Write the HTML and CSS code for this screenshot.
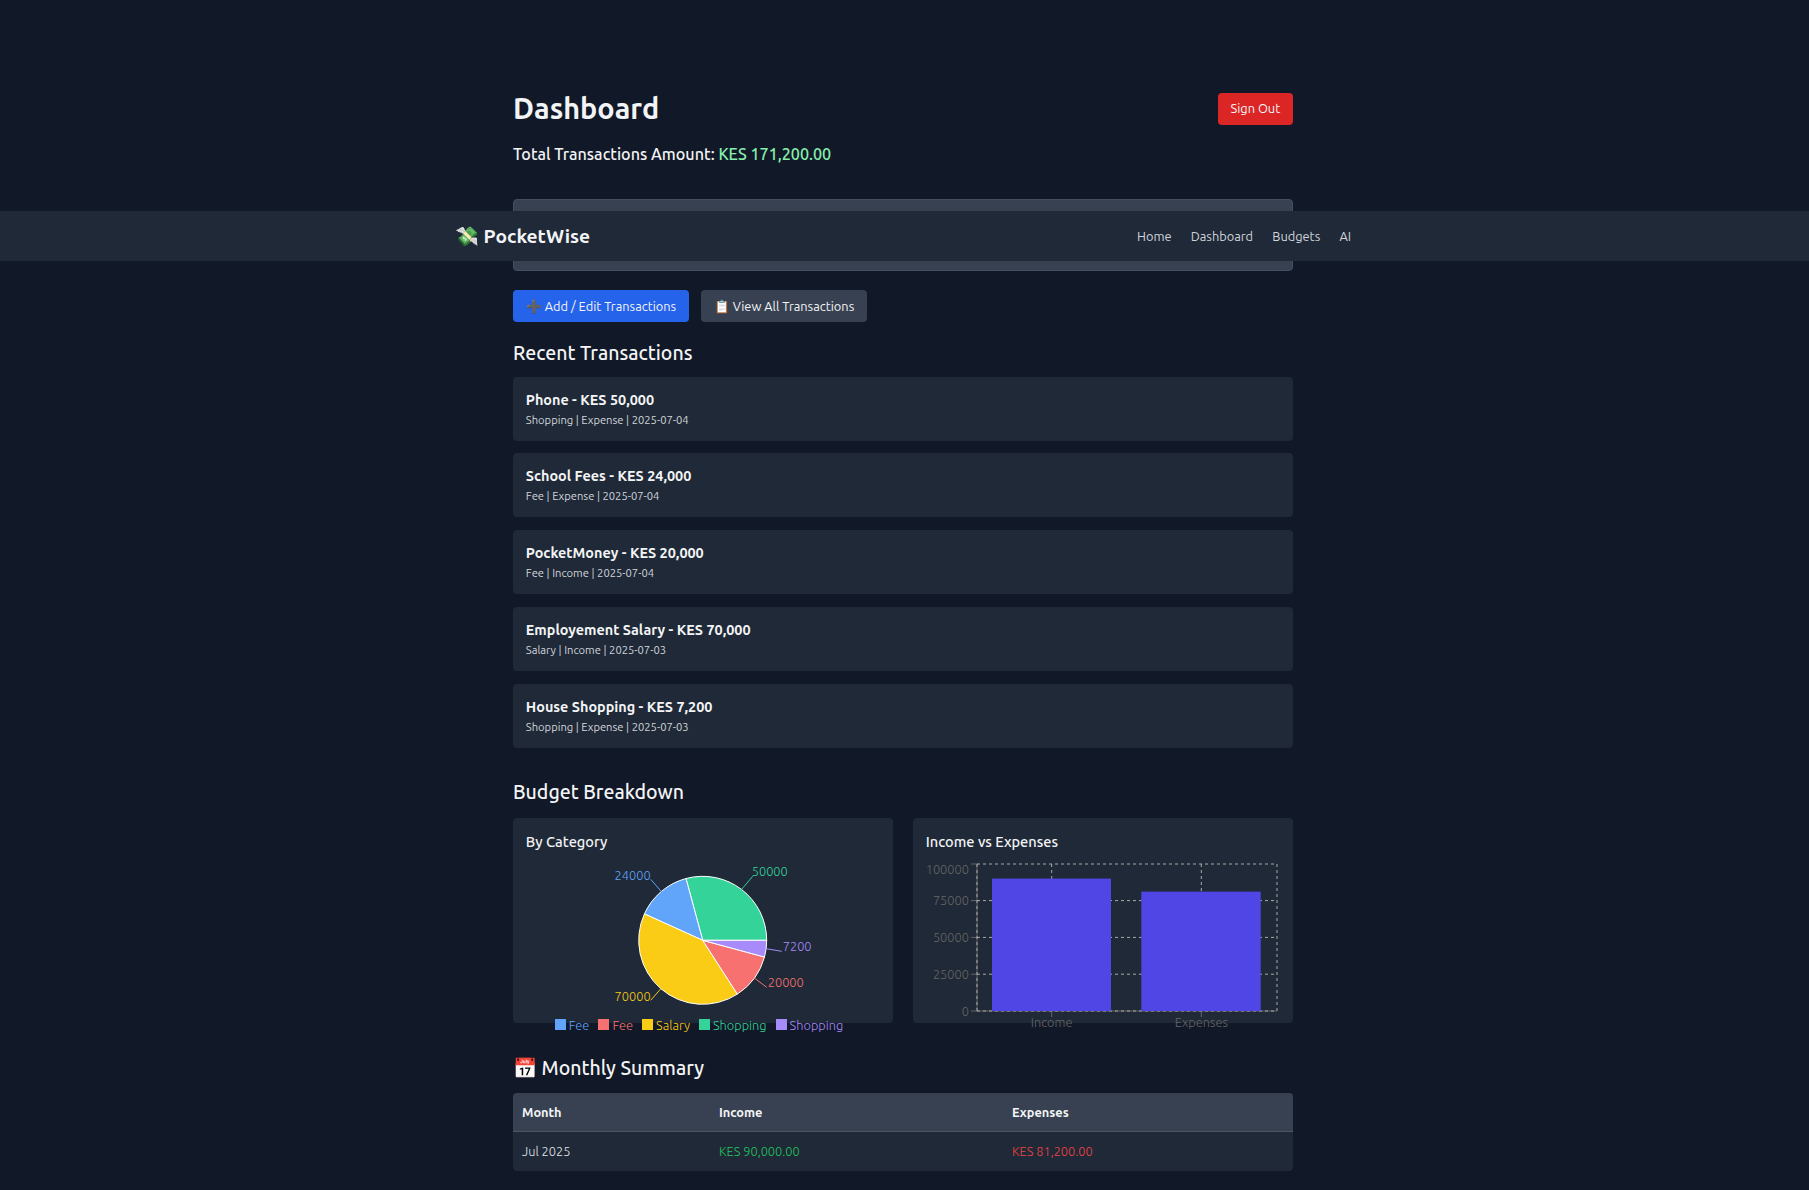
FILE: index.html
```html
<!DOCTYPE html>
<html lang="en">
<head>
<meta charset="UTF-8">
<meta name="viewport" content="width=device-width, initial-scale=1.0">
<title>PocketWise Dashboard</title>
<link rel="stylesheet" href="styles.css">
</head>
<body>
<nav class="navbar">
    <div class="nav-inner">
        <div class="logo"><span class="logo-icon">💸</span> PocketWise</div>
        <div class="nav-links">
            <a href="#">Home</a>
            <a href="#">Dashboard</a>
            <a href="#">Budgets</a>
            <a href="#">AI</a>
        </div>
    </div>
</nav>

<main class="page">
    <div class="page-head">
        <h1>Dashboard</h1>
        <button class="btn btn-red" type="button">Sign Out</button>
    </div>
    <p class="total">Total Transactions Amount: <span class="total-value">KES 171,200.00</span></p>

    <div class="notice"></div>

    <div class="actions">
        <a class="btn btn-blue" href="#">➕ Add / Edit Transactions</a>
        <a class="btn btn-gray" href="#">📋 View All Transactions</a>
    </div>

    <h2 class="section-title title-recent">Recent Transactions</h2>
    <div class="tx-card">
        <div class="tx-name">Phone - KES 50,000</div>
        <div class="tx-meta">Shopping | Expense | 2025-07-04</div>
    </div>
    <div class="tx-card">
        <div class="tx-name">School Fees - KES 24,000</div>
        <div class="tx-meta">Fee | Expense | 2025-07-04</div>
    </div>
    <div class="tx-card">
        <div class="tx-name">PocketMoney - KES 20,000</div>
        <div class="tx-meta">Fee | Income | 2025-07-04</div>
    </div>
    <div class="tx-card">
        <div class="tx-name">Employement Salary - KES 70,000</div>
        <div class="tx-meta">Salary | Income | 2025-07-03</div>
    </div>
    <div class="tx-card">
        <div class="tx-name">House Shopping - KES 7,200</div>
        <div class="tx-meta">Shopping | Expense | 2025-07-03</div>
    </div>

    <h2 class="section-title title-budget">Budget Breakdown</h2>
    <div class="charts">
        <section class="chart-card">
            <h3>By Category</h3>
            <svg class="chart pie-chart" width="354" height="165" viewBox="0 0 354 165">
                <g transform="translate(176.7 88.3)">
                    <g stroke="#fff" stroke-width="1">
                        <path fill="#34d399" d="M0 0L64 0A64 64 0 0 0 -16.72 -61.78Z"/>
                        <path fill="#60a5fa" d="M0 0L-16.72 -61.78A64 64 0 0 0 -58.29 -26.43Z"/>
                        <path fill="#facc15" d="M0 0L-58.29 -26.43A64 64 0 0 0 34.66 53.8Z"/>
                        <path fill="#f87171" d="M0 0L34.66 53.8A64 64 0 0 0 61.78 16.72Z"/>
                        <path fill="#a78bfa" d="M0 0L61.78 16.72A64 64 0 0 0 64 0Z"/>
                    </g>
                    <g fill="none">
                        <path stroke="#34d399" d="M39 -51L50 -64"/>
                        <path stroke="#60a5fa" d="M-41.4 -48.8L-52 -61"/>
                        <path stroke="#facc15" d="M-41.8 48.4L-52 60"/>
                        <path stroke="#f87171" d="M51.7 37.8L64 47"/>
                        <path stroke="#a78bfa" d="M63.4 8.4L79 11"/>
                    </g>
                    <g class="pie-label">
                        <text x="49" y="-64.5" fill="#34d399">50000</text>
                        <text x="-52" y="-60.5" fill="#60a5fa" text-anchor="end">24000</text>
                        <text x="-52" y="60.5" fill="#facc15" text-anchor="end">70000</text>
                        <text x="65" y="46.5" fill="#f87171">20000</text>
                        <text x="80" y="10.5" fill="#a78bfa">7200</text>
                    </g>
                </g>
            </svg>
            <ul class="legend">
                <li class="legend-blue">Fee</li>
                <li class="legend-red">Fee</li>
                <li class="legend-yellow">Salary</li>
                <li class="legend-green">Shopping</li>
                <li class="legend-purple">Shopping</li>
            </ul>
        </section>
        <section class="chart-card">
            <h3>Income vs Expenses</h3>
            <svg class="chart" width="354" height="180" viewBox="0 0 354 180">
                <g stroke="#666" fill="none">
                    <path d="M51 159H351"/>
                    <path d="M51 12V159"/>
                    <path d="M45 159H51M45 122.2H51M45 85.4H51M45 48.6H51M45 12H51"/>
                    <path d="M125.7 159V165M275.3 159V165"/>
                </g>
                <g stroke="#aaa" fill="none" stroke-dasharray="3 3">
                    <path d="M51 122.2H351M51 85.4H351M51 48.6H351M51 12H351"/>
                    <path d="M125.7 12V159M275.3 12V159M51 12V159M351 12V159M51 159H351"/>
                </g>
                <rect x="66" y="26.6" width="119" height="132.4" fill="#4f46e5"/>
                <rect x="215.3" y="39.6" width="119.4" height="119.4" fill="#4f46e5"/>
                <g class="axis-label">
                    <text x="43" y="163.5" text-anchor="end">0</text>
                    <text x="43" y="126.5" text-anchor="end">25000</text>
                    <text x="43" y="90" text-anchor="end">50000</text>
                    <text x="43" y="53" text-anchor="end">75000</text>
                    <text x="43" y="21.5" text-anchor="end">100000</text>
                    <text x="125.7" y="175" text-anchor="middle">Income</text>
                    <text x="275.3" y="175" text-anchor="middle">Expenses</text>
                </g>
            </svg>
        </section>
    </div>

    <h2 class="section-title title-monthly">📅 Monthly Summary</h2>
    <table class="summary">
        <thead>
            <tr>
                <th class="col-month">Month</th>
                <th class="col-income">Income</th>
                <th>Expenses</th>
            </tr>
        </thead>
        <tbody>
            <tr>
                <td>Jul 2025</td>
                <td class="income">KES 90,000.00</td>
                <td class="expense">KES 81,200.00</td>
            </tr>
        </tbody>
    </table>
</main>
</body>
</html>
```

FILE: styles.css
```css
* {
    box-sizing: border-box;
}

body {
    margin: 0;
    padding-right: 3px;
    background-color: #111827;
    color: #f3f4f6;
    font-family: Ubuntu, "Noto Sans", "Open Sans", sans-serif;
}

.navbar {
    position: absolute;
    top: 211px;
    left: 0;
    right: 0;
    height: 50px;
    padding-right: 3px;
    background-color: #1f2937;
}

.nav-inner {
    width: 896px;
    height: 100%;
    margin: 0 auto;
    display: flex;
    align-items: center;
    justify-content: space-between;
}

.logo {
    font-size: 19.2px;
    font-weight: 700;
    color: #f3f4f6;
}

.nav-links {
    display: flex;
    gap: 19.2px;
}

.nav-links a {
    font-size: 12.8px;
    color: #d1d5db;
    text-decoration: none;
}

.page {
    width: 780px;
    margin: 0 auto;
    padding-top: 90px;
}

.page-head {
    display: flex;
    align-items: center;
    justify-content: space-between;
}

h1 {
    margin: 0;
    font-size: 28.8px;
    line-height: 36px;
    font-weight: 700;
}

.total {
    margin: 14px 0 31px;
    font-size: 16.15px;
    line-height: 28px;
    font-weight: 500;
}

.total-value {
    color: #86efac;
}

.notice {
    height: 72px;
    background-color: #374151;
    border: 1px solid #444e5e;
    border-radius: 4px;
}

.btn {
    display: inline-flex;
    align-items: center;
    height: 32px;
    padding: 0 12.8px;
    font-family: inherit;
    font-size: 12.8px;
    color: #f3f4f6;
    text-decoration: none;
    border: none;
    border-radius: 4px;
}

.btn-red {
    background-color: #dc2626;
    margin-top: 2px;
    padding-bottom: 2px;
}

.btn-blue {
    background-color: #2563eb;
}

.btn-gray {
    background-color: #374151;
}

.actions {
    display: flex;
    gap: 12px;
    margin-top: 19px;
}

.section-title {
    margin: 0;
    font-size: 19.5px;
    line-height: 28px;
    font-weight: 500;
}

.title-recent {
    margin-top: 17px;
    margin-bottom: 9.6px;
}

.title-budget {
    margin-top: 30.5px;
    margin-bottom: 12px;
}

.title-monthly {
    margin-top: 30.8px;
    margin-bottom: 11.6px;
}

.tx-card {
    height: 64px;
    margin-bottom: 12.8px;
    padding: 11px 12.8px;
    background-color: #1f2937;
    border-radius: 4px;
}

.tx-name {
    font-size: 14.4px;
    line-height: 24px;
    font-weight: 700;
}

.tx-meta {
    font-size: 11.2px;
    line-height: 16px;
    color: #d1d5db;
}

.charts {
    display: grid;
    grid-template-columns: 1fr 1fr;
    gap: 20px;
}

.chart-card {
    height: 204.6px;
    padding: 13.4px 12.8px 0;
    background-color: #1f2937;
    border-radius: 4px;
}

h3 {
    margin: 0;
    font-size: 14.6px;
    line-height: 20px;
    font-weight: 500;
}

.chart {
    display: block;
    overflow: visible;
}

.pie-label text,
.axis-label text {
    font-size: 12.8px;
    font-weight: 300;
}

.axis-label text {
    fill: #666;
}

.legend {
    display: flex;
    justify-content: center;
    gap: 9px;
    margin: 0;
    padding: 0 8px 0 0;
    list-style: none;
    font-size: 12.8px;
    font-weight: 300;
    line-height: 16px;
}

.legend li {
    display: flex;
    align-items: center;
    gap: 3px;
}

.legend li::before {
    content: "";
    width: 11px;
    height: 11px;
}

.legend-blue { color: #60a5fa; }
.legend-blue::before { background-color: #60a5fa; }
.legend-red { color: #f87171; }
.legend-red::before { background-color: #f87171; }
.legend-yellow { color: #facc15; }
.legend-yellow::before { background-color: #facc15; }
.legend-green { color: #34d399; }
.legend-green::before { background-color: #34d399; }
.legend-purple { color: #a78bfa; }
.legend-purple::before { background-color: #a78bfa; }

.summary {
    width: 100%;
    border-collapse: separate;
    border-spacing: 0;
    font-size: 12.8px;
    font-weight: 300;
    color: #e5e7eb;
    background-color: #1f2937;
    border-radius: 4px;
    overflow: hidden;
}

.summary th,
.summary td {
    height: 38.4px;
    padding: 0 9px;
    text-align: left;
}

.summary th {
    height: 39px;
    background-color: #374151;
    color: #f3f4f6;
    font-weight: 700;
    border-bottom: 1px solid #4b5563;
}

.col-month {
    width: 197px;
}

.col-income {
    width: 293px;
}

.summary .income {
    color: #22c55e;
}

.summary .expense {
    color: #ef4444;
}
```
